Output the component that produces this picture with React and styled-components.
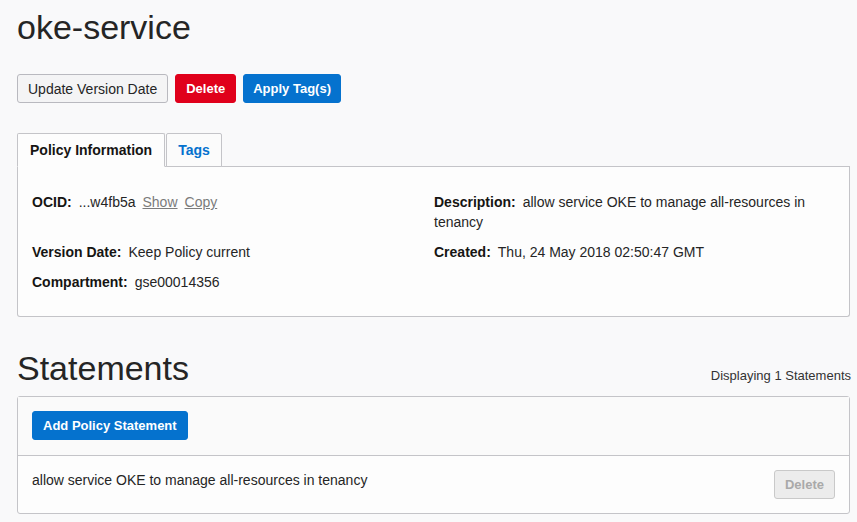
import React from "react";
import styled, { createGlobalStyle } from "styled-components";

const Global = createGlobalStyle`
  html, body { margin: 0; padding: 0; background: #f9f9fa; }
  body { font-family: "Liberation Sans", Arial, Helvetica, sans-serif; color: #252525; }
  * { box-sizing: border-box; }
`;

const Page = styled.div`
  padding: 7px 6px 0 17px;
  width: 857px;
`;

const Title = styled.h1`
  margin: 0;
  font-size: 34px;
  line-height: 40px;
  font-weight: 400;
  color: #252525;
`;

const Toolbar = styled.div`
  display: flex;
  gap: 7px;
  margin-top: 27px;
`;

const Button = styled.button`
  height: 29px;
  padding: 0 ${(p) => (p.$pad ? p.$pad : 10)}px;
  font-family: "Liberation Sans", Arial, sans-serif;
  font-size: ${(p) => (p.$variant === "default" ? "14px" : "13px")};
  font-weight: ${(p) => (p.$variant === "default" ? 400 : 700)};
  border-radius: 3px;
  cursor: pointer;
  border: 1px solid
    ${(p) =>
      p.$variant === "danger"
        ? "#e0001b"
        : p.$variant === "primary"
        ? "#0572ce"
        : p.$variant === "disabled"
        ? "#c9c9c9"
        : "#b9b9bf"};
  background: ${(p) =>
    p.$variant === "danger"
      ? "#e0001b"
      : p.$variant === "primary"
      ? "#0572ce"
      : p.$variant === "disabled"
      ? "#ececec"
      : "#f4f4f5"};
  color: ${(p) =>
    p.$variant === "danger" || p.$variant === "primary"
      ? "#ffffff"
      : p.$variant === "disabled"
      ? "#a9a9a9"
      : "#252525"};
`;

const Tabs = styled.div`
  display: flex;
  margin-top: 30px;
  border-bottom: 1px solid #c4c4c8;
  width: 833px;
`;

const Tab = styled.div`
  height: 34px;
  margin-bottom: -1px;
  padding: 0 ${(p) => (p.$active ? 12 : 11)}px;
  display: flex;
  align-items: center;
  font-size: 14px;
  font-weight: 700;
  border: 1px solid #c4c4c8;
  border-bottom: ${(p) => (p.$active ? "1px solid #fdfdfd" : "1px solid #c4c4c8")};
  border-radius: 2px 2px 0 0;
  background: ${(p) => (p.$active ? "#fdfdfd" : "#fbfbfb")};
  color: ${(p) => (p.$active ? "#161513" : "#0572ce")};
  margin-right: 1px;
`;

const Panel = styled.div`
  width: 833px;
  border: 1px solid #c4c4c8;
  border-top: none;
  border-radius: 0 0 3px 3px;
  background: #fdfdfd;
  padding: 25px 14px 24px 14px;
  display: grid;
  grid-template-columns: 402px 1fr;
  row-gap: 10px;
`;

const Field = styled.div`
  font-size: 14px;
  line-height: 20px;
  color: #252525;
`;

const Label = styled.span`
  font-weight: 700;
  margin-right: 7px;
  color: #161513;
`;

const Link = styled.a`
  color: #7b7b7b;
  text-decoration: underline;
  margin-left: 7px;
  cursor: pointer;
`;

const SectionHead = styled.div`
  display: flex;
  justify-content: space-between;
  align-items: baseline;
  margin-top: 31px;
  width: 834px;
`;

const SectionTitle = styled.h2`
  margin: 0;
  font-size: 34px;
  line-height: 40px;
  font-weight: 400;
  color: #252525;
`;

const Count = styled.div`
  font-size: 13px;
  color: #333;
`;

const Box = styled.div`
  margin-top: 8px;
  width: 833px;
  border: 1px solid #c4c4c8;
  border-radius: 3px;
  background: #fdfdfd;
`;

const BoxHeader = styled.div`
  padding: 14px 14px;
  border-bottom: 1px solid #c4c4c8;
  background: #fafafa;
  height: 59px;
`;

const Row = styled.div`
  display: flex;
  align-items: flex-start;
  justify-content: space-between;
  padding: 14px 14px 14px 14px;
  font-size: 14px;
  line-height: 20px;
  color: #252525;
`;

export default function App() {
  return (
    <>
      <Global />
      <Page>
        <Title>oke-service</Title>
        <Toolbar>
          <Button $variant="default" $pad={10}>Update Version Date</Button>
          <Button $variant="danger" $pad={10}>Delete</Button>
          <Button $variant="primary" $pad={9}>Apply Tag(s)</Button>
        </Toolbar>
        <Tabs>
          <Tab $active>Policy Information</Tab>
          <Tab>Tags</Tab>
        </Tabs>
        <Panel>
          <Field>
            <Label>OCID:</Label>...w4fb5a<Link>Show</Link><Link>Copy</Link>
          </Field>
          <Field>
            <Label>Description:</Label>allow service OKE to manage all-resources in tenancy
          </Field>
          <Field>
            <Label>Version Date:</Label>Keep Policy current
          </Field>
          <Field>
            <Label>Created:</Label>Thu, 24 May 2018 02:50:47 GMT
          </Field>
          <Field>
            <Label>Compartment:</Label>gse00014356
          </Field>
        </Panel>
        <SectionHead>
          <SectionTitle>Statements</SectionTitle>
          <Count>Displaying 1 Statements</Count>
        </SectionHead>
        <Box>
          <BoxHeader>
            <Button $variant="primary" $pad={10}>Add Policy Statement</Button>
          </BoxHeader>
          <Row>
            <span>allow service OKE to manage all-resources in tenancy</span>
            <Button $variant="disabled" $pad={10}>Delete</Button>
          </Row>
        </Box>
      </Page>
    </>
  );
}
